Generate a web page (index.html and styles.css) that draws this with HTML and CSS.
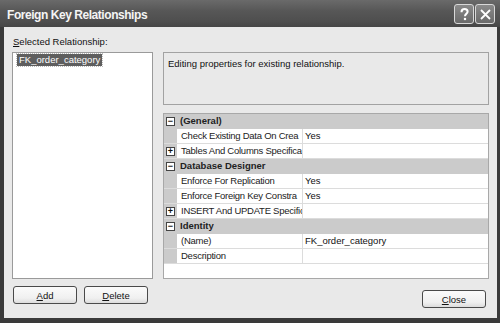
FILE: index.html
```html
<!DOCTYPE html>
<html>
<head>
<meta charset="utf-8">
<link rel="stylesheet" href="styles.css">
</head>
<body>
<div class="window">
  <div class="titlebar">
    <span class="title">Foreign Key Relationships</span>
    <div class="tbtns">
      <span class="tbtn">
        <svg width="13" height="13" viewBox="0 0 13 13"><path d="M3.5 4.2 C3.5 1.8 5 1 6.6 1 C8.4 1 9.6 2.1 9.6 3.7 C9.6 5.6 7 6 7 8.2" fill="none" stroke="#fff" stroke-width="2"/><rect x="5.9" y="9.9" width="2.2" height="2.2" fill="#fff"/></svg>
      </span>
      <span class="tbtn">
        <svg width="13" height="13" viewBox="0 0 13 13"><path d="M2 2 L11 11 M11 2 L2 11" stroke="#fff" stroke-width="1.8"/></svg>
      </span>
    </div>
  </div>
  <div class="body">
    <div class="label"><u>S</u>elected Relationship:</div>
    <div class="panes">
      <div class="list">
        <span class="item">FK_order_category</span>
      </div>
      <div class="right">
        <div class="desc">Editing properties for existing relationship.</div>
        <div class="grid">
          <div class="row cat"><span class="g"><i class="box">−</i></span><span class="n">(General)</span></div>
          <div class="row"><span class="g"></span><span class="n">Check Existing Data On Crea</span><span class="v">Yes</span></div>
          <div class="row"><span class="g"><i class="box">+</i></span><span class="n">Tables And Columns Specifica</span><span class="v"></span></div>
          <div class="row cat"><span class="g"><i class="box">−</i></span><span class="n">Database Designer</span></div>
          <div class="row"><span class="g"></span><span class="n">Enforce For Replication</span><span class="v">Yes</span></div>
          <div class="row"><span class="g"></span><span class="n">Enforce Foreign Key Constra</span><span class="v">Yes</span></div>
          <div class="row"><span class="g"><i class="box">+</i></span><span class="n">INSERT And UPDATE Specific</span><span class="v"></span></div>
          <div class="row cat"><span class="g"><i class="box">−</i></span><span class="n">Identity</span></div>
          <div class="row"><span class="g"></span><span class="n">(Name)</span><span class="v">FK_order_category</span></div>
          <div class="row"><span class="g"></span><span class="n">Description</span><span class="v"></span></div>
        </div>
      </div>
    </div>
    <div class="buttons">
      <div class="left-btns">
        <button class="btn"><u>A</u>dd</button>
        <button class="btn"><u>D</u>elete</button>
      </div>
      <button class="btn close"><u>C</u>lose</button>
    </div>
  </div>
</div>
</body>
</html>
```

FILE: styles.css
```css
html, body {
  margin: 0;
  padding: 0;
  width: 500px;
  height: 323px;
  overflow: hidden;
  background: #2a2a2a;
}
*, *::before, *::after {
  box-sizing: border-box;
}
.window {
  width: 500px;
  height: 323px;
  display: flex;
  flex-direction: column;
  background: #3a3a3a;
  font-family: "Liberation Sans", Arial, sans-serif;
  font-size: 9.5px;
  color: #111;
}
.titlebar {
  height: 27px;
  flex: none;
  display: flex;
  align-items: center;
  justify-content: space-between;
  padding: 0 5px 0 7px;
  background: linear-gradient(#6a6a6a, #575757 40%, #4e4e4e 80%, #464646);
}
.title {
  color: #f4f4f4;
  font-weight: bold;
  font-size: 12px;
  letter-spacing: -0.45px;
  margin-top: 2px;
}
.tbtns {
  display: flex;
  gap: 1px;
  margin-top: 1px;
}
.tbtn {
  width: 20px;
  height: 20px;
  border: 1px solid #d8d8d8;
  border-radius: 3px;
  background: linear-gradient(#8a8a8a, #6a6a6a);
  display: flex;
  align-items: center;
  justify-content: center;
}
.body {
  flex: 1;
  margin: 0 3px 5px 4px;
  background: #e9e9e9;
  padding: 9px 8px 0 8px;
  display: flex;
  flex-direction: column;
}
.label {
  height: 16px;
  line-height: 11px;
  padding-left: 1px;
}
.panes {
  display: flex;
  gap: 10px;
  height: 227px;
}
.list {
  width: 141px;
  flex: none;
  border: 1px solid #9a9a9a;
  background: #fff;
  padding: 1px 0 0 4px;
}
.item {
  display: inline-block;
  background: #5e5e5e;
  color: #fff;
  padding: 0 2px;
  height: 12px;
  line-height: 12px;
  outline: 1px dotted #bbb;
}
.right {
  width: 326px;
  flex: none;
  display: flex;
  flex-direction: column;
  gap: 8px;
}
.desc {
  height: 53px;
  border: 1px solid #a2a2a2;
  padding: 5px 4px;
}
.grid {
  flex: 1;
  border: 1px solid #a8a8a8;
  background: #fff;
}
.row {
  display: flex;
  height: 15px;
  line-height: 14px;
  border-bottom: 1px solid #dcdcdc;
}
.row .g {
  width: 13px;
  flex: none;
  background: #cbcbcb;
  display: flex;
  align-items: center;
  justify-content: center;
}
.box {
  font-style: normal;
  width: 9px;
  height: 9px;
  border: 1px solid #444;
  background: #fff;
  font-size: 9px;
  line-height: 6px;
  text-align: center;
  color: #111;
  font-weight: bold;
  overflow: hidden;
}
.row .n {
  width: 126px;
  flex: none;
  padding-left: 4px;
  border-right: 1px solid #dcdcdc;
  white-space: nowrap;
  overflow: hidden;
  letter-spacing: -0.25px;
  color: #222;
}
.row .v {
  flex: 1;
  padding-left: 2px;
  white-space: nowrap;
}
.row.cat {
  background: #cbcbcb;
  border-bottom: 1px solid #cbcbcb;
}
.row.cat .n {
  font-weight: bold;
  border-right: none;
  width: auto;
  padding-left: 3px;
  letter-spacing: 0;
}
.buttons {
  display: flex;
  justify-content: space-between;
  margin-top: 7px;
  padding-left: 1px;
  padding-right: 3px;
}
.left-btns {
  display: flex;
  gap: 7px;
}
.btn {
  width: 64px;
  height: 18px;
  padding: 0;
  border: 1px solid #4a4a4a;
  border-radius: 3px;
  background: linear-gradient(#fbfbfb, #f0f0f0 70%, #dcdcdc);
  font-family: "Liberation Sans", Arial, sans-serif;
  font-size: 9.5px;
  color: #111;
}
.close {
  margin-top: 4px;
}
```
